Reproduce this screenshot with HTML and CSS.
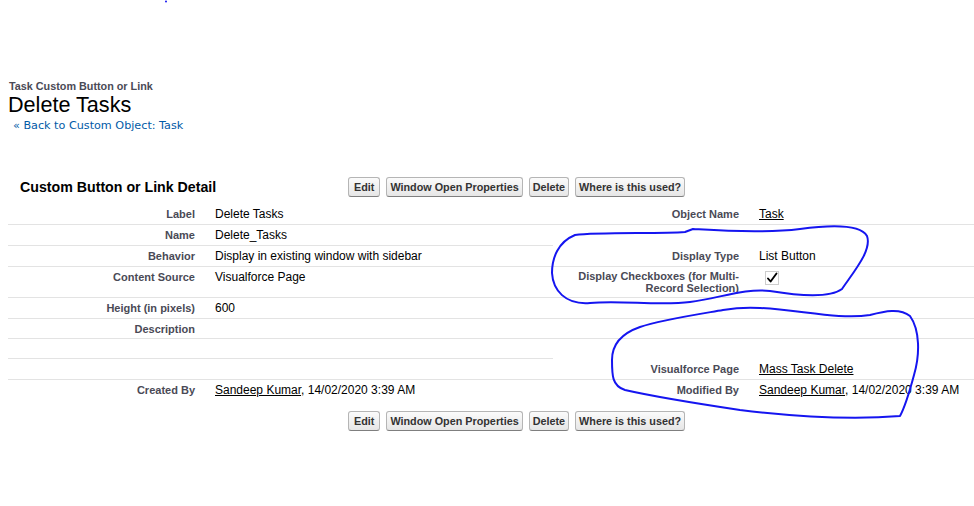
FILE: index.html
```html
<!DOCTYPE html>
<html>
<head>
<meta charset="UTF-8">
<title>Custom Button or Link: Delete Tasks</title>
<link rel="stylesheet" href="styles.css">
</head>
<body>

<div class="page-head">
	<div class="page-type">Task Custom Button or Link</div>
	<h1 class="page-title">Delete Tasks</h1>
	<div class="breadcrumb">&laquo; <a href="#">Back to Custom Object: Task</a></div>
</div>

<div class="pblock">
	<div class="pb-header">
		<h2 class="pb-title">Custom Button or Link Detail</h2>
		<div class="pb-buttons">
			<button class="btn" type="button">Edit</button>
			<button class="btn" type="button">Window Open Properties</button>
			<button class="btn" type="button">Delete</button>
			<button class="btn" type="button">Where is this used?</button>
		</div>
	</div>

	<table class="detail">
		<colgroup>
			<col class="c-label"><col class="c-data"><col class="c-label2"><col class="c-data2">
		</colgroup>
		<tbody>
		<tr>
			<td class="label">Label</td>
			<td class="data">Delete Tasks</td>
			<td class="label">Object Name</td>
			<td class="data"><a href="#">Task</a></td>
		</tr>
		<tr>
			<td class="label">Name</td>
			<td class="data">Delete_Tasks</td>
			<td class="label noline">&nbsp;</td>
			<td class="data noline"></td>
		</tr>
		<tr>
			<td class="label">Behavior</td>
			<td class="data">Display in existing window with sidebar</td>
			<td class="label">Display Type</td>
			<td class="data">List Button</td>
		</tr>
		<tr>
			<td class="label">Content Source</td>
			<td class="data">Visualforce Page</td>
			<td class="label multi">Display Checkboxes (for Multi-Record Selection)</td>
			<td class="data">
				<svg class="check" width="14" height="14" viewBox="0 0 14 14">
					<rect x="0.5" y="0.5" width="13" height="13" fill="none" stroke="#9a9a9a" stroke-dasharray="1 1"/>
					<path d="M3 7.5 L5.6 10.5 L11.5 2.5" fill="none" stroke="#000" stroke-width="1.9" stroke-linecap="round" stroke-linejoin="round"/>
				</svg>
			</td>
		</tr>
		<tr>
			<td class="label">Height (in pixels)</td>
			<td class="data">600</td>
			<td class="label">&nbsp;</td>
			<td class="data"></td>
		</tr>
		<tr>
			<td class="label">Description</td>
			<td class="data"></td>
			<td class="label">&nbsp;</td>
			<td class="data"></td>
		</tr>
		<tr>
			<td class="label">&nbsp;</td>
			<td class="data"></td>
			<td class="label noline">&nbsp;</td>
			<td class="data noline"></td>
		</tr>
		<tr>
			<td class="label">&nbsp;</td>
			<td class="data"></td>
			<td class="label">Visualforce Page</td>
			<td class="data"><a href="#">Mass Task Delete</a></td>
		</tr>
		<tr class="last">
			<td class="label">Created By</td>
			<td class="data"><a href="#">Sandeep Kumar</a>, 14/02/2020 3:39 AM</td>
			<td class="label">Modified By</td>
			<td class="data"><a href="#">Sandeep Kumar</a>, 14/02/2020 3:39 AM</td>
		</tr>
		</tbody>
	</table>

	<div class="pb-footer">
		<div class="pb-spacer"></div>
		<div class="pb-buttons">
			<button class="btn" type="button">Edit</button>
			<button class="btn" type="button">Window Open Properties</button>
			<button class="btn" type="button">Delete</button>
			<button class="btn" type="button">Where is this used?</button>
		</div>
	</div>
</div>

<!-- pen marks drawn over the screenshot -->
<svg class="marks" width="974" height="506" viewBox="0 0 974 506">
	<circle cx="166" cy="1.5" r="1" fill="#1515f0" stroke="none"/>
	<path d="M575 235 C600 232 660 234 685 232 L693 229 C710 230 760 234 800 229 C830 225 860 224 867 236 C872 250 855 270 842 289 C830 298 800 296 770 291 C745 288 720 298 690 302 C660 306 620 300 590 303 C565 305 553 290 552 273 C552 258 558 242 575 235"/>
	<path d="M723 310 C700 314 660 320 640 327 C620 334 612 345 612 360 C612 375 612 386 625 390 C660 398 700 404 740 410 C790 416 850 420 900 416 C906 405 910 390 914 375 C920 355 920 330 910 316 C900 308 885 311 870 315 C840 320 800 310 760 308 C745 307 735 308 723 310"/>
</svg>

</body>
</html>
```

FILE: styles.css
```css
html, body {
	overflow: hidden;
}
body {
	margin: 8px 0 8px 8px;
	font-family: Arial, "Liberation Sans", Helvetica, sans-serif;
	font-size: 12px;
	color: #000;
	background: #fff;
}
a {
	color: #000;
}

/* page header */
.page-head {
	padding-top: 72px;
}
.page-type {
	font-size: 10.8px;
	line-height: 13px;
	font-weight: bold;
	color: #4a4a56;
	padding-left: 1px;
}
.page-title {
	margin: 0;
	font-size: 21.6px;
	line-height: 24px;
	font-weight: normal;
	color: #000;
}
.breadcrumb {
	margin-top: 2px;
	padding-left: 5px;
	font-family: Verdana, "DejaVu Sans", sans-serif;
	font-size: 11.2px;
	line-height: 14px;
	color: #015ba7;
}
.breadcrumb a {
	color: #015ba7;
	text-decoration: none;
}

/* page block */
.pblock {
	margin-top: 44px;
}
.pb-header, .pb-footer {
	display: flex;
	align-items: center;
}
.pb-header {
	padding-bottom: 7px;
}
.pb-footer {
	padding-top: 11px;
}
.pb-title {
	margin: 0;
	width: 328px;
	padding-left: 12px;
	font-size: 14.2px;
	font-weight: bold;
	color: #000;
}
.pb-spacer {
	width: 340px;
}
.pb-buttons {
	display: flex;
	gap: 6px;
}
.btn {
	font-family: Arial, "Liberation Sans", Helvetica, sans-serif;
	font-size: 10.8px;
	font-weight: bold;
	line-height: 14px;
	color: #333;
	padding: 2px 3px;
	margin: 0;
	border: 1px solid #b5b5b5;
	border-bottom-color: #7f7f7f;
	border-radius: 3px;
	background: linear-gradient(#fbfbfb, #e6e6e6);
}
.btn:first-child {
	padding: 2px 5px;
}

/* detail list */
.detail {
	width: 966px;
	table-layout: fixed;
	border-collapse: collapse;
}
.c-label { width: 197px; }
.c-data { width: 348px; }
.c-label2 { width: 196px; }
.c-data2 { width: 225px; }

.detail td {
	vertical-align: top;
	border-bottom: 1px solid #e3e3e3;
}
.detail td.label {
	padding: 4px 10px 3px 2px;
	text-align: right;
	font-size: 11px;
	line-height: 12px;
	font-weight: bold;
	color: #4a4a56;
}
.detail td.multi {
	line-height: 11.5px;
}
.detail td.data {
	padding: 4px 2px 3px 10px;
	font-size: 12px;
	line-height: 13px;
	color: #000;
}
.detail td.noline,
.detail tr.last td {
	border-bottom: none;
}
.check {
	display: block;
	margin: 0 0 0 6px;
}

.marks {
	position: absolute;
	top: 0;
	left: 0;
	pointer-events: none;
	fill: none;
	stroke: #1515f0;
	stroke-width: 2;
	stroke-linecap: round;
	stroke-linejoin: round;
}
```
